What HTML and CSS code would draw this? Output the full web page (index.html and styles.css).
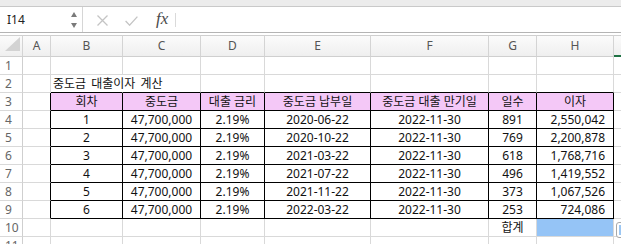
FILE: index.html
```html
<!DOCTYPE html>
<html>
<head>
    <meta charset="UTF-8">
    <title>중도금 대출이자 계산</title>
    <link rel="stylesheet" href="styles.css">
</head>
<body>
    <div class="top-strip"></div>

    <div class="formula-bar">
        <div class="name-box">
            <span>I14</span>
            <span class="spinner">
                <span class="arrow-up"></span>
                <span class="arrow-down"></span>
            </span>
        </div>
        <span class="fb-icon cancel">
            <svg width="11" height="11" viewBox="0 0 11 11"><path d="M0.5 0.5 L10.5 10.5 M10.5 0.5 L0.5 10.5" stroke="#c4c4c4" stroke-width="1.3" fill="none"/></svg>
        </span>
        <span class="fb-icon enter">
            <svg width="13" height="10" viewBox="0 0 13 10"><path d="M0.6 5 L4.6 9.2 L12.4 0.6" stroke="#c4c4c4" stroke-width="1.3" fill="none"/></svg>
        </span>
        <span class="fx">fx</span>
        <span class="fb-divider"></span>
        <div class="formula-input"></div>
    </div>

    <table class="sheet">
        <colgroup>
            <col style="width: 23px">
            <col style="width: 28px">
            <col style="width: 72px">
            <col style="width: 78px">
            <col style="width: 64px">
            <col style="width: 106px">
            <col style="width: 118px">
            <col style="width: 48px">
            <col style="width: 77px">
            <col style="width: 60px">
        </colgroup>
        <tr class="col-heads">
            <td class="corner"><span class="corner-mark"></span></td>
            <td>A</td><td>B</td><td>C</td><td>D</td><td>E</td><td>F</td><td>G</td><td>H</td>
            <td class="current"></td>
        </tr>
        <tr>
            <td class="rh">1</td>
            <td></td><td></td><td></td><td></td><td></td><td></td><td></td><td></td><td></td>
        </tr>
        <tr>
            <td class="rh">2</td>
            <td></td>
            <td class="tt title spill">중도금 대출이자 계산</td>
            <td class="tt"></td><td class="tt"></td><td class="tt"></td><td class="tt"></td><td class="tt"></td><td class="tt"></td>
            <td></td>
        </tr>
        <tr>
            <td class="rh">3</td>
            <td class="lb"></td>
            <td class="box hd">회차</td>
            <td class="box hd">중도금</td>
            <td class="box hd">대출 금리</td>
            <td class="box hd">중도금 납부일</td>
            <td class="box hd">중도금 대출 만기일</td>
            <td class="box hd">일수</td>
            <td class="box hd">이자</td>
            <td></td>
        </tr>
        <tr>
            <td class="rh">4</td>
            <td class="lb"></td>
            <td class="box">1</td><td class="box">47,700,000</td><td class="box">2.19%</td>
            <td class="box">2020-06-22</td><td class="box">2022-11-30</td><td class="box">891</td>
            <td class="box num">2,550,042</td>
            <td></td>
        </tr>
        <tr>
            <td class="rh">5</td>
            <td class="lb"></td>
            <td class="box">2</td><td class="box">47,700,000</td><td class="box">2.19%</td>
            <td class="box">2020-10-22</td><td class="box">2022-11-30</td><td class="box">769</td>
            <td class="box num">2,200,878</td>
            <td></td>
        </tr>
        <tr>
            <td class="rh">6</td>
            <td class="lb"></td>
            <td class="box">3</td><td class="box">47,700,000</td><td class="box">2.19%</td>
            <td class="box">2021-03-22</td><td class="box">2022-11-30</td><td class="box">618</td>
            <td class="box num">1,768,716</td>
            <td></td>
        </tr>
        <tr>
            <td class="rh">7</td>
            <td class="lb"></td>
            <td class="box">4</td><td class="box">47,700,000</td><td class="box">2.19%</td>
            <td class="box">2021-07-22</td><td class="box">2022-11-30</td><td class="box">496</td>
            <td class="box num">1,419,552</td>
            <td></td>
        </tr>
        <tr>
            <td class="rh">8</td>
            <td class="lb"></td>
            <td class="box">5</td><td class="box">47,700,000</td><td class="box">2.19%</td>
            <td class="box">2021-11-22</td><td class="box">2022-11-30</td><td class="box">373</td>
            <td class="box num">1,067,526</td>
            <td></td>
        </tr>
        <tr>
            <td class="rh">9</td>
            <td class="lb"></td>
            <td class="box">6</td><td class="box">47,700,000</td><td class="box">2.19%</td>
            <td class="box">2022-03-22</td><td class="box">2022-11-30</td><td class="box">253</td>
            <td class="box num">724,086</td>
            <td></td>
        </tr>
        <tr>
            <td class="rh">10</td>
            <td></td><td></td><td></td><td></td><td></td><td></td>
            <td>합계</td>
            <td class="total"></td>
            <td></td>
        </tr>
        <tr>
            <td class="rh">11</td>
            <td></td><td></td><td></td><td></td><td></td><td></td><td></td><td></td><td></td>
        </tr>
    </table>

    <div class="quick-btn"><span></span></div>
</body>
</html>
```

FILE: styles.css
```css
body {
    margin: 0;
    width: 621px;
    height: 244px;
    overflow: hidden;
    position: relative;
    background: #fff;
    font-family: "Noto Sans", "Noto Sans CJK KR", sans-serif;
    font-size: 12px;
    color: #111;
}
.top-strip {
    height: 6px;
    background-color: #ececec;
    border-bottom: 1px solid #c9c9c9;
}
.formula-bar {
    display: flex;
    align-items: center;
    height: 25px;
    border-bottom: 1px solid #b4b4b4;
    margin-bottom: 2px;
    background: #fff;
}
.name-box {
    box-sizing: border-box;
    width: 83px;
    height: 100%;
    display: flex;
    align-items: center;
    justify-content: space-between;
    padding: 0 5px 0 7px;
    border-right: 1px solid #d6d6d6;
    color: #222;
    font-size: 12px;
}
.spinner {
    display: flex;
    flex-direction: column;
    gap: 6px;
    margin-top: 1px;
}
.arrow-up,
.arrow-down {
    width: 0;
    height: 0;
    border-left: 3.5px solid transparent;
    border-right: 3.5px solid transparent;
}
.arrow-up {
    border-bottom: 5px solid #7a7a7a;
}
.arrow-down {
    border-top: 5px solid #7a7a7a;
}
.fb-icon {
    display: flex;
    margin-top: 2px;
}
.cancel {
    margin-left: 14px;
}
.enter {
    margin-left: 17px;
}
.fx {
    margin-left: 18px;
    font-family: "Liberation Serif", serif;
    font-style: italic;
    font-size: 17px;
    color: #4a4a4a;
    margin-top: -1px;
}
.fb-divider {
    width: 1px;
    height: 14px;
    margin-left: 7px;
    background-color: #dadada;
}
.formula-input {
    flex: 1;
}
.sheet {
    table-layout: fixed;
    border-collapse: separate;
    border-spacing: 0;
    width: 674px;
}
.sheet td {
    box-sizing: border-box;
    padding: 1px 0 0 0;
    line-height: 16px;
    border-right: 1px solid #d9d9d9;
    border-bottom: 1px solid #d9d9d9;
    text-align: center;
    white-space: nowrap;
    overflow: visible;
}
.col-heads td {
    background: linear-gradient(#fbfbfb, #efefef);
    border-top: 1px solid #cfcfcf;
    border-right-color: #d4d4d4;
    border-bottom-color: #cfcfcf;
    color: #555;
    line-height: 20px;
    padding: 0;
}
.col-heads .current {
    border-bottom: 2px solid #1f7244;
    line-height: 19px;
}
.corner {
    position: relative;
}
.corner-mark {
    position: absolute;
    right: 2px;
    bottom: 5px;
    width: 0;
    height: 0;
    border-left: 15px solid transparent;
    border-bottom: 14px solid #d3d3d3;
}
.sheet td.rh {
    text-align: left;
    padding-left: 5px;
    color: #666;
    border-right-color: #cfcfcf;
}
.sheet td.title {
    text-align: left;
    padding-left: 2px;
    word-spacing: 2px;
}
.sheet td.spill {
    border-right-color: transparent;
}
.sheet td.tt {
    border-bottom-color: #000;
}
.sheet td.lb {
    border-right-color: #000;
}
.sheet td.box {
    border-right-color: #000;
    border-bottom-color: #000;
}
.sheet td.hd {
    background-color: #f4c8f7;
}
.sheet td.num {
    text-align: right;
    padding-right: 8px;
}
.sheet td.total {
    background-color: #95c4f6;
}
.quick-btn {
    position: absolute;
    left: 616px;
    top: 222px;
    width: 16px;
    height: 16px;
    box-sizing: border-box;
    border: 1px solid #a9a9a9;
    border-radius: 3px;
    background: #fff;
    padding: 2px;
}
.quick-btn span {
    display: block;
    width: 100%;
    height: 100%;
    background-color: #9cc7f3;
}
```
